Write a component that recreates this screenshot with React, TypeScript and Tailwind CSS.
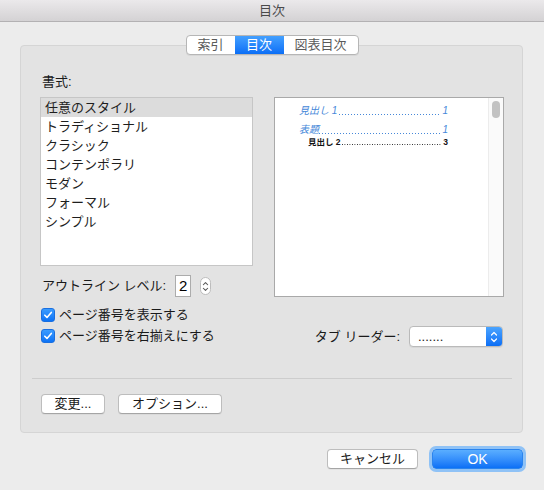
import React from 'react';

const styles = ['任意のスタイル', 'トラディショナル', 'クラシック', 'コンテンポラリ', 'モダン', 'フォーマル', 'シンプル'];

function Check() {
  return (
    <span className="flex h-[14px] w-[14px] items-center justify-center rounded-[3px] bg-gradient-to-b from-[#3a9cff] to-[#0b72f5] border border-[#1a6fe0]">
      <svg width="10" height="10" viewBox="0 0 10 10" fill="none">
        <path d="M1.8 5.2 L4 7.4 L8.3 2.4" stroke="white" strokeWidth="1.6" strokeLinecap="round" strokeLinejoin="round" />
      </svg>
    </span>
  );
}

function Chevrons({ color, w = 8, h = 14 }: { color: string; w?: number; h?: number }) {
  return (
    <svg width={w} height={h} viewBox="0 0 8 14" fill="none">
      <path d="M1.5 5 L4 2.5 L6.5 5" stroke={color} strokeWidth="1.2" strokeLinecap="round" strokeLinejoin="round" />
      <path d="M1.5 9 L4 11.5 L6.5 9" stroke={color} strokeWidth="1.2" strokeLinecap="round" strokeLinejoin="round" />
    </svg>
  );
}

function Button({ label, width }: { label: string; width: string }) {
  return (
    <button
      className={`flex h-[20px] ${width} items-center justify-center rounded-[4px] border border-[#bdbdbd] border-b-[#a5a5a5] bg-white text-[13px] leading-[18px] text-[#1a1a1a] shadow-[0_1px_0_rgba(0,0,0,0.04)]`}
    >
      {label}
    </button>
  );
}

export default function App() {
  return (
    <div className="h-[490px] w-[544px] overflow-hidden bg-[#ececec] font-['Liberation_Sans','Noto_Sans_CJK_JP',sans-serif]">
      <div className="flex h-[22px] items-center justify-center border-b border-[#b3b1b3] bg-gradient-to-b from-[#ebe9eb] to-[#d4d2d4] text-[13px] leading-[16px] text-[#4a4a4a]">
        目次
      </div>

      <div className="relative z-10 mt-[13px] flex justify-center">
        <div className="flex h-[20px] overflow-hidden rounded-[4px] border border-[#b6b6b6] bg-white text-[13px] leading-[18px] shadow-[0_1px_0_rgba(0,0,0,0.05)]">
          <span className="flex w-[48px] items-center justify-center text-[#5a5a5a]">索引</span>
          <span className="flex w-[49px] items-center justify-center bg-gradient-to-b from-[#43a0ff] to-[#0a6ef6] text-white">目次</span>
          <span className="flex w-[74px] items-center justify-center text-[#5a5a5a]">図表目次</span>
        </div>
      </div>

      <div className="-mt-[10px] ml-[20px] h-[388px] w-[503px] rounded-[4px] border border-[#d5d5d5] bg-[#e3e3e3] pt-[28px]">
        <div className="ml-[21px] mb-[7px] h-[16px] text-[13px] leading-[16px] text-[#1a1a1a]">書式:</div>

        <div className="flex gap-[21px] pl-[19px]">
          <div className="flex w-[213px] flex-col">
            <div className="h-[169px] border border-[#c6c6c6] bg-white">
              {styles.map((s, i) => (
                <div
                  key={s}
                  className={`h-[19px] pl-[4px] text-[13px] leading-[19px] text-[#1e1e1e] ${i === 0 ? 'bg-[#dcdcdc]' : ''}`}
                >
                  {s}
                </div>
              ))}
            </div>

            <div className="mt-[9px] flex h-[22px] items-center">
              <span className="ml-[2px] text-[13px] leading-[16px] text-[#1a1a1a]">アウトライン レベル:</span>
              <span className="ml-[9px] flex h-[22px] w-[16px] items-center justify-center border border-[#acacac] bg-white text-[15px] leading-[18px] text-black">
                2
              </span>
              <span className="ml-[9px] flex h-[18px] w-[11px] items-center justify-center rounded-full border border-[#bdbdbd] bg-white">
                <Chevrons color="#555" w={7} h={13} />
              </span>
            </div>

            <div className="mt-[7px] flex h-[21px] items-center gap-[4px] pl-[1px]">
              <Check />
              <span className="text-[13px] leading-[16px] text-[#1a1a1a]">ページ番号を表示する</span>
            </div>
            <div className="flex h-[21px] items-center gap-[4px] pl-[1px]">
              <Check />
              <span className="text-[13px] leading-[16px] text-[#1a1a1a]">ページ番号を右揃えにする</span>
            </div>
          </div>

          <div className="flex w-[230px] flex-col">
            <div className="flex h-[200px] border border-[#a9a9a9] bg-white">
              <div className="flex-1 pl-[24px] pt-[6px]">
                <div className="flex h-[14px] w-[149px] items-end text-[10px] italic leading-[14px] text-[#4688d9]">
                  <span className="whitespace-nowrap pr-[2px]">見出し 1</span>
                  <span className="mb-[3px] h-[1px] flex-1 bg-[linear-gradient(to_right,#4688d9_1px,transparent_1px)] bg-[length:3px_1px] bg-repeat-x" />
                  <span className="pl-[1px]">1</span>
                </div>
                <div className="mt-[5px] flex h-[14px] w-[149px] items-end text-[10px] italic leading-[14px] text-[#4688d9]">
                  <span className="whitespace-nowrap">表題</span>
                  <span className="mb-[3px] h-[1px] flex-1 bg-[linear-gradient(to_right,#4688d9_1px,transparent_1px)] bg-[length:3px_1px] bg-repeat-x" />
                  <span className="pl-[1px]">1</span>
                </div>
                <div className="ml-[9px] flex h-[10px] w-[140px] items-end text-[8.5px] font-bold leading-[10px] text-[#111]">
                  <span className="whitespace-nowrap pr-[1px]">見出し 2</span>
                  <span className="mb-[2px] h-[1px] flex-1 bg-[linear-gradient(to_right,#222_1px,transparent_1px)] bg-[length:2.5px_1px] bg-repeat-x" />
                  <span className="pl-[1px]">3</span>
                </div>
              </div>
              <div className="w-[15px] border-l border-[#ececec] bg-[#fafafa] pl-[3px] pt-[3px]">
                <div className="h-[17px] w-[8px] rounded-full bg-[#c2c2c2]" />
              </div>
            </div>

            <div className="mt-[29px] flex h-[21px] items-center justify-end pr-[1px]">
              <span className="text-[13px] leading-[16px] text-[#1a1a1a]">タブ リーダー:</span>
              <div className="ml-[9px] flex h-[21px] w-[94px] overflow-hidden rounded-[4px] border border-[#bababa] bg-white shadow-[0_1px_0_rgba(0,0,0,0.05)]">
                <span className="flex-1 pl-[8px] text-[13px] leading-[20px] text-[#1a1a1a]">.......</span>
                <span className="flex w-[16px] items-center justify-center bg-gradient-to-b from-[#4aa4ff] to-[#0a6ef5]">
                  <Chevrons color="white" />
                </span>
              </div>
            </div>
          </div>
        </div>

        <div className="ml-[11px] mr-[10px] mt-[31px] h-px bg-[#cdcdcd]" />

        <div className="mt-[15px] flex gap-[13px] pl-[20px]">
          <Button label="変更..." width="w-[64px]" />
          <Button label="オプション..." width="w-[104px]" />
        </div>
      </div>

      <div className="mt-[16px] flex justify-end gap-[14px] pr-[21px]">
        <Button label="キャンセル" width="w-[91px]" />
        <button className="flex h-[20px] w-[91px] items-center justify-center rounded-[4px] border border-[#2a84ee] bg-gradient-to-b from-[#5aaeff] to-[#0a70f6] text-[14px] leading-[18px] text-white shadow-[0_0_0_3px_#8fc2f6]">
          OK
        </button>
      </div>
    </div>
  );
}
